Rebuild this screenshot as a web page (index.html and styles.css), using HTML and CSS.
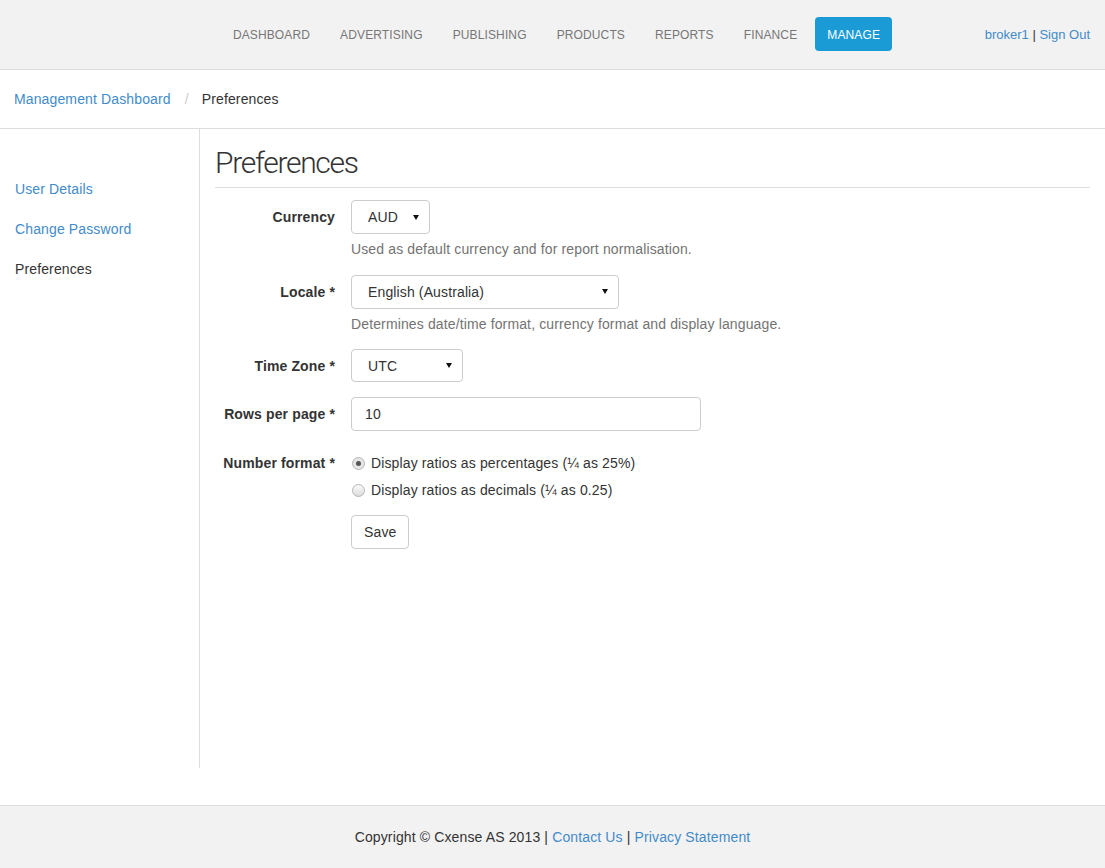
FILE: index.html
```html
<!DOCTYPE html>
<html lang="en">
<head>
    <meta charset="UTF-8">
    <meta name="viewport" content="width=device-width, initial-scale=1.0">
    <title>Preferences</title>
    <link rel="stylesheet" href="styles.css">
</head>
<body>
    <header class="topbar">
        <div></div>
        <nav class="main-nav">
            <a href="#">Dashboard</a>
            <a href="#">Advertising</a>
            <a href="#">Publishing</a>
            <a href="#">Products</a>
            <a href="#">Reports</a>
            <a href="#">Finance</a>
            <a href="#" class="active">Manage</a>
        </nav>
        <div class="user-links">
            <a href="#">broker1</a> | <a href="#">Sign Out</a>
        </div>
    </header>

    <div class="breadcrumb">
        <a href="#">Management Dashboard</a>
        <span class="divider">/</span>
        <span class="current">Preferences</span>
    </div>

    <div class="page">
        <aside class="sidebar">
            <ul>
                <li><a href="#">User Details</a></li>
                <li><a href="#">Change Password</a></li>
                <li class="active">Preferences</li>
            </ul>
        </aside>

        <main class="content">
            <h1>Preferences</h1>
            <form class="prefs-form">
                <div class="form-group">
                    <label>Currency</label>
                    <div class="field">
                        <div class="select-box w-currency">AUD <span class="caret"></span></div>
                        <p class="help">Used as default currency and for report normalisation.</p>
                    </div>
                </div>
                <div class="form-group">
                    <label>Locale *</label>
                    <div class="field">
                        <div class="select-box w-locale">English (Australia) <span class="caret"></span></div>
                        <p class="help">Determines date/time format, currency format and display language.</p>
                    </div>
                </div>
                <div class="form-group">
                    <label>Time Zone *</label>
                    <div class="field">
                        <div class="select-box w-zone">UTC <span class="caret"></span></div>
                    </div>
                </div>
                <div class="form-group">
                    <label>Rows per page *</label>
                    <div class="field">
                        <div class="text-box">10</div>
                    </div>
                </div>
                <div class="form-group">
                    <label>Number format *</label>
                    <div class="field radios">
                        <div class="radio"><span class="dot checked"></span>Display ratios as percentages (¼ as 25%)</div>
                        <div class="radio"><span class="dot"></span>Display ratios as decimals (¼ as 0.25)</div>
                    </div>
                </div>
                <div class="form-group">
                    <div class="label-spacer"></div>
                    <div class="field">
                        <button type="button" class="btn">Save</button>
                    </div>
                </div>
            </form>
        </main>
    </div>

    <footer class="footer">
        Copyright © Cxense AS 2013 | <a href="#">Contact Us</a> | <a href="#">Privacy Statement</a>
    </footer>
</body>
</html>
```

FILE: styles.css
```css
body {
    margin: 0;
    font-family: "Liberation Sans", Arial, sans-serif;
    font-size: 14px;
    line-height: 20px;
    letter-spacing: 0.13px;
    color: #333;
    background-color: #fff;
}
a {
    color: #428bca;
    text-decoration: none;
}

/* Top navigation */
.topbar {
    display: grid;
    grid-template-columns: 1fr auto 1fr;
    align-items: start;
    height: 52px;
    padding: 17px 15px 0;
    background-color: #f2f2f2;
    border-bottom: 1px solid #ddd;
}
.main-nav {
    display: flex;
    gap: 6px;
    margin-left: 8px;
}
.main-nav a {
    display: block;
    padding: 8px 12px 6px;
    font-size: 12px;
    line-height: 20px;
    letter-spacing: 0.13px;
    text-transform: uppercase;
    color: #777;
    border-radius: 4px;
}
.main-nav a.active {
    background-color: #1a9bd5;
    color: #fff;
}
.user-links {
    justify-self: end;
    padding-top: 8px;
    font-size: 13px;
    letter-spacing: 0;
}

/* Breadcrumb */
.breadcrumb {
    height: 58px;
    display: flex;
    align-items: center;
    padding: 0 14px;
    border-bottom: 1px solid #ddd;
}
.breadcrumb .divider {
    color: #ccc;
    margin: 0 13px 0 14px;
}

/* Page body */
.page {
    display: flex;
    margin-bottom: 37px;
}
.sidebar {
    width: 199px;
    min-height: 639px;
    border-right: 1px solid #ddd;
}
.sidebar ul {
    list-style: none;
    margin: 0;
    padding: 40px 0 0;
}
.sidebar li {
    padding: 10px 15px;
}
.content {
    flex: 1;
    padding: 0 15px;
}
.content h1 {
    margin: 16px 0 12px;
    padding-bottom: 6px;
    font-family: Roboto, "Liberation Sans", sans-serif;
    font-weight: 300;
    font-size: 30px;
    line-height: 36px;
    letter-spacing: -1.3px;
    color: #333;
    border-bottom: 1px solid #ddd;
}

/* Form */
.form-group {
    display: flex;
    margin-bottom: 15px;
}
.form-group label,
.label-spacer {
    width: 120px;
    flex-shrink: 0;
    margin-right: 16px;
    text-align: right;
    font-weight: bold;
    padding-top: 7px;
}
.label-spacer {
    padding: 0;
}
.select-box,
.text-box {
    box-sizing: border-box;
    height: 34px;
    border: 1px solid #ccc;
    border-radius: 4px;
    padding: 6px 10px 6px 16px;
    display: flex;
    align-items: center;
    justify-content: space-between;
    background: #fff;
}
.text-box {
    width: 350px;
    padding-left: 13px;
}
.w-currency { width: 79px; }
.w-locale { width: 268px; }
.w-zone {
    width: 112px;
    height: 33px;
}
.caret {
    width: 0;
    height: 0;
    border-left: 3px solid transparent;
    border-right: 3px solid transparent;
    border-top: 5px solid #111;
}
.help {
    margin: 5px 0 0.5px;
    color: #737373;
}
.radios {
    padding-top: 7px;
}
.radio {
    display: flex;
    align-items: center;
    height: 20px;
}
.radio + .radio {
    margin-top: 7px;
}
.dot {
    box-sizing: border-box;
    width: 13px;
    height: 13px;
    border-radius: 50%;
    border: 1px solid #b5b5b5;
    background: linear-gradient(#fafafa, #dcdcdc);
    margin: 0 6px 0 1px;
    position: relative;
}
.dot.checked {
    background: #e6e6e6;
}
.dot.checked::after {
    content: "";
    position: absolute;
    top: 3px;
    left: 3px;
    width: 5px;
    height: 5px;
    border-radius: 50%;
    background: #555;
}
.btn {
    height: 34px;
    padding: 6px 12px;
    font-family: inherit;
    font-size: 14px;
    letter-spacing: inherit;
    color: #333;
    background: #fff;
    border: 1px solid #ccc;
    border-radius: 4px;
}

/* Footer */
.footer {
    background-color: #f2f2f2;
    border-top: 1px solid #ddd;
    text-align: center;
    padding: 21px 0;
}
```
